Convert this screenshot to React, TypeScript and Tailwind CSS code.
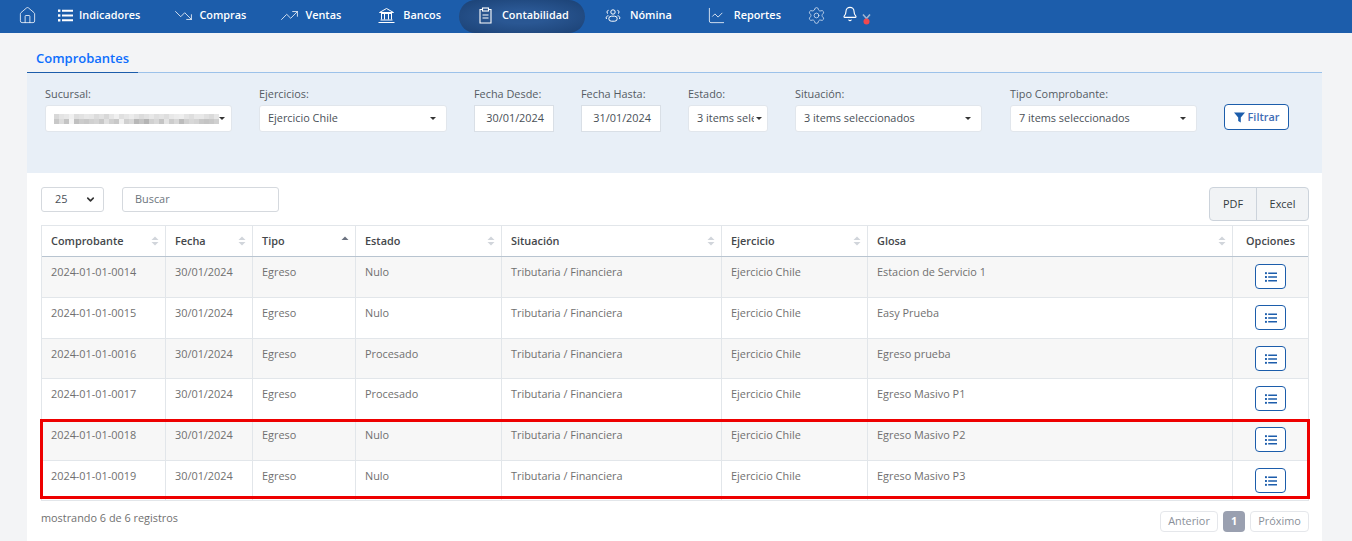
import { Home, Settings, TrendingDown, TrendingUp, ChartLine, Bell, ChevronDown } from "lucide-react";

const rows = [
  { id: "2024-01-01-0014", estado: "Nulo", glosa: "Estacion de Servicio 1", h: "h-[41px]" },
  { id: "2024-01-01-0015", estado: "Nulo", glosa: "Easy Prueba", h: "h-[41px]" },
  { id: "2024-01-01-0016", estado: "Procesado", glosa: "Egreso prueba", h: "h-[40px]" },
  { id: "2024-01-01-0017", estado: "Procesado", glosa: "Egreso Masivo P1", h: "h-[41px]" },
  { id: "2024-01-01-0018", estado: "Nulo", glosa: "Egreso Masivo P2", h: "h-[41px]" },
  { id: "2024-01-01-0019", estado: "Nulo", glosa: "Egreso Masivo P3", h: "h-[39px]" },
];

const columns = [
  { name: "Comprobante", w: "w-[124px]" },
  { name: "Fecha", w: "w-[87px]" },
  { name: "Tipo", w: "w-[103px]", sorted: true },
  { name: "Estado", w: "w-[146px]" },
  { name: "Situación", w: "w-[220px]" },
  { name: "Ejercicio", w: "w-[146px]" },
  { name: "Glosa", w: "w-[365px]" },
];

// redacted branch name, pixelated in the original
const blurShades = [
  "#d8d8d8", "#e4e4e4", "#e8e8e8", "#f0f0f0", "#dedede", "#e2e2e2", "#e8e8e8", "#e6e6e6", "#dcdcdc", "#e2e2e2", "#d8d8d8",
  "#e6e6e6", "#f0f0f0", "#e0e0e0", "#e6e6e6", "#ececec", "#e4e4e4", "#dcdcdc", "#e2e2e2", "#e8e8e8", "#e0e0e0", "#e4e4e4",
  "#dedede", "#e8e8e8", "#ececec", "#eeeeee", "#e4e4e4", "#dedede", "#e8e8e8", "#e8e8e8", "#e0e0e0", "#dadada", "#e6e6e6",
  "#c8c8c8", "#dcdcdc", "#c4c4c4", "#f4f4f4", "#c0c0c0", "#cccccc", "#c8c8c8", "#d0d0d0", "#d4d4d4", "#c8c8c8", "#e0e0e0",
  "#d0d0d0", "#c8c8c8", "#f0f0f0", "#d0d0d0", "#d8d8d8", "#b8b8b8", "#c4c4c4", "#b4b4b4", "#d0d0d0", "#d8d8d8", "#c4c4c4",
  "#e4e4e4", "#cccccc", "#d8d8d8", "#bcbcbc", "#d0d0d0", "#d8d8d8", "#d4d4d4", "#c8c8c8", "#c4c4c4", "#c8c8c8", "#d0d0d0",
];

function SortArrows({ sorted }: { sorted?: boolean }) {
  return (
    <svg width="8" height="10" viewBox="0 0 8 10" className="absolute right-[6px] top-[10px]">
      <path d="M4 0.5 7.5 4H.5z" fill={sorted ? "#6b7280" : "#d1d5db"} />
      {!sorted && <path d="M4 9.5 7.5 6H.5z" fill="#d1d5db" />}
    </svg>
  );
}

function Caret() {
  return <span className="ml-auto h-0 w-0 shrink-0 border-x-[3.5px] border-t-[3.5px] border-x-transparent border-t-[#333]" />;
}

function ListIcon({ size = 15, width = 2 }: { size?: number; width?: number }) {
  return (
    <svg width={size} height={size} viewBox="0 0 15 15" fill="currentColor">
      <rect x="0" y="1.5" width="2.4" height="2.4" />
      <rect x="0" y="6.3" width="2.4" height="2.4" />
      <rect x="0" y="11.1" width="2.4" height="2.4" />
      <path d="M4 2.7h11M4 7.5h11M4 12.3h11" stroke="currentColor" strokeWidth={width} />
    </svg>
  );
}

function BankIcon() {
  return (
    <svg width="17" height="17" viewBox="0 0 17 17" fill="none" stroke="currentColor" strokeWidth="1">
      <path d="M8.5 1.5 15.5 5.5H1.5zM3 6.5h11M3.5 7v5.5M6.5 7v5.5M10.5 7v5.5M13.5 7v5.5M2.5 13h12M.5 15.5h16" />
    </svg>
  );
}

function ClipIcon() {
  return (
    <svg width="15" height="17" viewBox="0 0 15 17" fill="none" stroke="currentColor" strokeWidth="1.1">
      <path d="M4.5 2.5H2v13.5h11V2.5h-2.5" />
      <rect x="4.5" y="1" width="6" height="3" />
      <path d="M4.5 8h6M4.5 11h6" />
    </svg>
  );
}

function PeopleIcon() {
  return (
    <svg width="16" height="15" viewBox="0 0 16 15" fill="none" stroke="currentColor" strokeWidth="1">
      <circle cx="8" cy="4" r="2.2" />
      <path d="M3.6 2.3a1.8 1.8 0 0 0-.6 3.4M12.4 2.3a1.8 1.8 0 0 1 .6 3.4" />
      <path d="M1.5 11c-1-1.8.4-3.2 2-3.2M14.5 11c1-1.8-.4-3.2-2-3.2" />
      <rect x="3.8" y="8.2" width="8.4" height="5" rx="2.5" />
    </svg>
  );
}

function RibbonDot() {
  return (
    <svg width="9" height="11" viewBox="0 0 9 11" className="mt-[5px]">
      <path d="M1 .5 4.5 4.5 8 .5" fill="none" stroke="#9db4d2" strokeWidth="1.6" />
      <circle cx="4.5" cy="7.5" r="3" fill="#f0484e" />
    </svg>
  );
}

function NavItem({ icon, label, className }: { icon: React.ReactNode; label: string; className: string }) {
  return (
    <a className={`flex h-[33px] items-center pb-[2px] text-[10.88px] font-semibold text-white ${className}`}>
      {icon}
      <span>{label}</span>
    </a>
  );
}

function Field({ label, w, children }: { label: string; w: string; children: React.ReactNode }) {
  return (
    <div className={`${w} shrink-0`}>
      <label className="block h-[24px] pt-[5px] text-[10.88px] leading-[15px] text-[#555b63]">{label}</label>
      {children}
    </div>
  );
}

function Select({ text }: { text: string }) {
  return (
    <div className="flex h-[27px] items-center rounded-[3px] border border-[#e1e6ec] bg-white pl-[8px] pr-[10px] text-[10.88px] text-[#495057]">
      <span className="overflow-hidden whitespace-nowrap">{text}</span>
      <Caret />
    </div>
  );
}

function DateInput({ value }: { value: string }) {
  return (
    <div className="flex h-[27px] items-center justify-end border border-[#d9dfe6] bg-white pr-[9px] text-[10.88px] text-[#495057]">
      {value}
    </div>
  );
}

export default function App() {
  return (
    <div className="h-[541px] w-[1352px] overflow-hidden bg-[#f3f4f6] font-['Open_Sans',sans-serif]">
      <nav className="flex h-[33px] items-center bg-[#1c5dab] pl-[18px] text-white">
        <Home size={19} strokeWidth={1} className="-mt-[2px]" />
        <NavItem className="ml-[21px] gap-[6px]" label="Indicadores" icon={<ListIcon />} />
        <NavItem className="ml-[34px] gap-[6px]" label="Compras" icon={<TrendingDown size={19} strokeWidth={1} />} />
        <NavItem className="ml-[34px] gap-[6px]" label="Ventas" icon={<TrendingUp size={19} strokeWidth={1} />} />
        <NavItem className="ml-[37px] gap-[8px]" label="Bancos" icon={<BankIcon />} />
        <NavItem
          className="ml-[18px] w-[126px] gap-[9px] rounded-full bg-[radial-gradient(ellipse_at_center,#2a5793_30%,#1b4174_100%)] pl-[19px]"
          label="Contabilidad"
          icon={<ClipIcon />}
        />
        <NavItem className="ml-[20px] gap-[9px]" label="Nómina" icon={<PeopleIcon />} />
        <NavItem className="ml-[35px] gap-[8px]" label="Reportes" icon={<ChartLine size={19} strokeWidth={1} />} />
        <Settings size={19} strokeWidth={1} className="-mt-[2px] ml-[26px] text-[#d5e2f2]" />
        <Bell size={16} strokeWidth={1.7} className="-mt-[5px] ml-[16px]" />
        <span className="ml-[4px]"><RibbonDot /></span>
      </nav>

      <main className="mx-[27px] w-[1295px]">
        <div className="flex h-[40px] items-end border-b border-[#9cc2ea]">
          <div className="-mb-px border-b border-[#1c5dab] px-[9px] pb-[5px] text-[13px] font-semibold leading-[18px] text-[#0d6efd]">Comprobantes</div>
        </div>

        <section className="flex h-[100px] gap-[27px] bg-[#e8eff7] pl-[18px] pt-[8px]">
          <Field label="Sucursal:" w="w-[187px]">
            <div className="flex h-[27px] items-center rounded-[3px] border border-[#e1e6ec] bg-white pl-[8px] pr-[6px]">
              <div className="grid h-[10px] w-[165px] grid-cols-[repeat(33,5px)] grid-rows-[repeat(2,5px)]">
                {blurShades.map((shade, i) => (
                  <span key={i} style={{ backgroundColor: shade }} />
                ))}
              </div>
              <Caret />
            </div>
          </Field>
          <Field label="Ejercicios:" w="w-[188px]"><Select text="Ejercicio Chile" /></Field>
          <Field label="Fecha Desde:" w="w-[80px]"><DateInput value="30/01/2024" /></Field>
          <Field label="Fecha Hasta:" w="w-[80px]"><DateInput value="31/01/2024" /></Field>
          <Field label="Estado:" w="w-[80px]">
            <div className="flex h-[27px] items-center rounded-[3px] border border-[#e1e6ec] bg-white pl-[8px] pr-[5px] text-[10.88px] text-[#495057]">
              <span className="w-[57px] overflow-hidden whitespace-nowrap">3 items seleccionados</span>
              <Caret />
            </div>
          </Field>
          <Field label="Situación:" w="w-[187px]"><Select text="3 items seleccionados" /></Field>
          <div className="ml-[1px]">
            <Field label="Tipo Comprobante:" w="w-[187px]"><Select text="7 items seleccionados" /></Field>
          </div>
          <button className="mt-[23px] flex h-[26px] w-[65px] items-center justify-center gap-[3px] rounded-[4px] border border-[#1c5dab] bg-white text-[10.88px] font-semibold text-[#3f6db5]">
            <svg width="11" height="11" viewBox="0 0 11 11"><path d="M0 .5h11L6.8 5.6V10.5L4.2 9V5.6z" fill="#1c5dab" /></svg>
            Filtrar
          </button>
        </section>

        <section className="h-[368px] bg-white pl-[14px] pr-[13px]">
          <div className="flex h-[52px] items-start pt-[14px]">
            <div className="flex h-[25px] w-[63px] items-center justify-between rounded-[3px] border border-[#d5d9de] pl-[13px] pr-[7px] text-[10.88px] text-[#495057]">
              25
              <ChevronDown size={11} strokeWidth={3.5} className="text-[#333]" />
            </div>
            <div className="ml-[18px] flex h-[25px] w-[157px] items-center rounded-[3px] border border-[#d5d9de] pl-[12px] text-[10.88px] text-[#6c757d]">Buscar</div>
            <div className="ml-auto flex h-[34px] rounded-[4px] border border-[#ccd3db] bg-[#f1f3f5] text-[10.88px] text-[#343a40]">
              <span className="flex w-[47px] items-center justify-center border-r border-[#ccd3db]">PDF</span>
              <span className="flex w-[51px] items-center justify-center">Excel</span>
            </div>
          </div>

          <div className="relative w-[1268px]">
            <div className="border border-[#e2e6ea] text-[10.88px]">
              <div className="flex h-[31px] border-b border-[#b8c4d0] font-semibold text-[#44474b]">
                {columns.map((c) => (
                  <div key={c.name} className={`relative flex items-center border-r border-[#e2e6ea] pl-[9px] ${c.w}`}>
                    {c.name}
                    <SortArrows sorted={c.sorted} />
                  </div>
                ))}
                <div className="flex flex-1 items-center justify-center">Opciones</div>
              </div>
              {rows.map((r, i) => (
                <div key={r.id} className={`flex border-b border-[#e2e6ea] text-[#707070] last:border-b-0 ${r.h} ${i % 2 === 0 ? "bg-[#f7f7f7]" : "bg-white"}`}>
                  {[r.id, "30/01/2024", "Egreso", r.estado, "Tributaria / Financiera", "Ejercicio Chile", r.glosa].map((v, j) => (
                    <div key={j} className={`border-r border-[#e2e6ea] pl-[9px] pt-[7px] leading-[15px] ${columns[j].w}`}>{v}</div>
                  ))}
                  <div className="flex flex-1 justify-center pt-[7px]">
                    <button className="flex h-[25px] w-[31px] items-center justify-center rounded-[4px] border border-[#1c5dab] bg-white text-[#1c5dab]">
                      <ListIcon size={12} width={1.8} />
                    </button>
                  </div>
                </div>
              ))}
            </div>
            <div className="absolute bottom-[2px] left-[-1px] right-[-1px] h-[80px] border-[3px] border-[#ee0000]" />
          </div>

          <div className="mt-[10px] flex items-start justify-between">
            <span className="text-[10.88px] leading-[13px] text-[#707070]">mostrando 6 de 6 registros</span>
            <div className="flex gap-[5px] text-[10.88px] text-[#8a9099]">
              <span className="flex h-[21px] w-[58px] items-center justify-center rounded-[4px] border border-[#e5e7eb]">Anterior</span>
              <span className="flex h-[21px] w-[22px] items-center justify-center rounded-[4px] bg-[#9aa0b0] font-bold text-white">1</span>
              <span className="flex h-[21px] w-[59px] items-center justify-center rounded-[4px] border border-[#e5e7eb]">Próximo</span>
            </div>
          </div>
        </section>
      </main>
    </div>
  );
}
